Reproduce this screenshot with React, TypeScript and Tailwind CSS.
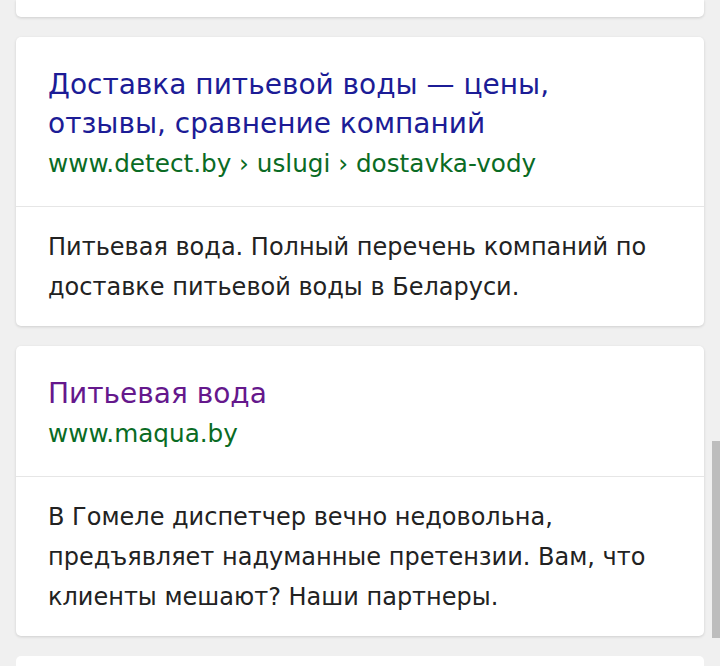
interface Result {
  title: string[];
  url: string;
  text: string[];
  visited?: boolean;
}

const results: Result[] = [
  {
    title: ["Доставка питьевой воды — цены,", "отзывы, сравнение компаний"],
    url: "www.detect.by › uslugi › dostavka-vody",
    text: ["Питьевая вода. Полный перечень компаний по", "доставке питьевой воды в Беларуси."],
  },
  {
    title: ["Питьевая вода"],
    url: "www.maqua.by",
    text: [
      "В Гомеле диспетчер вечно недовольна,",
      "предъявляет надуманные претензии. Вам, что",
      "клиенты мешают? Наши партнеры.",
    ],
    visited: true,
  },
];

function ResultCard({ item }: { item: Result }) {
  return (
    <div className="bg-white rounded-[5px] shadow-[0_1px_3px_rgba(0,0,0,0.14)]">
      <div className="px-8 pt-[28px] pb-[22px]">
        <div
          className={
            "text-[28px] leading-[39px] " +
            (item.visited ? "text-[#65188c]" : "text-[#1c1c96]")
          }
        >
          {item.title.map((t) => (
            <div key={t}>{t}</div>
          ))}
        </div>
        <div className="text-[24.7px] leading-[41px] text-[#0a6b24]">{item.url}</div>
      </div>
      <div className="h-px bg-[#e6e6e6]" />
      <div className="px-8 pt-[20px] pb-[19px] text-[24px] leading-[40px] text-[#222222]">
        {item.text.map((t) => (
          <div key={t}>{t}</div>
        ))}
      </div>
    </div>
  );
}

export default function App() {
  return (
    <div
      className="relative h-[666px] w-[720px] overflow-hidden bg-[#f0f0f0]"
      style={{ fontFamily: '"DejaVu Sans", "Noto Sans", sans-serif' }}
    >
      <div className="flex flex-col gap-[20px] px-4">
        <div className="h-[17px] bg-white rounded-b-[5px] shadow-[0_1px_3px_rgba(0,0,0,0.14)]" />
        {results.map((r) => (
          <ResultCard key={r.url} item={r} />
        ))}
        <div className="h-[40px] bg-white rounded-t-[5px]" />
      </div>
      <div className="absolute right-0 top-[441px] w-[8px] h-[197px] bg-[#bdbdbd]" />
    </div>
  );
}
